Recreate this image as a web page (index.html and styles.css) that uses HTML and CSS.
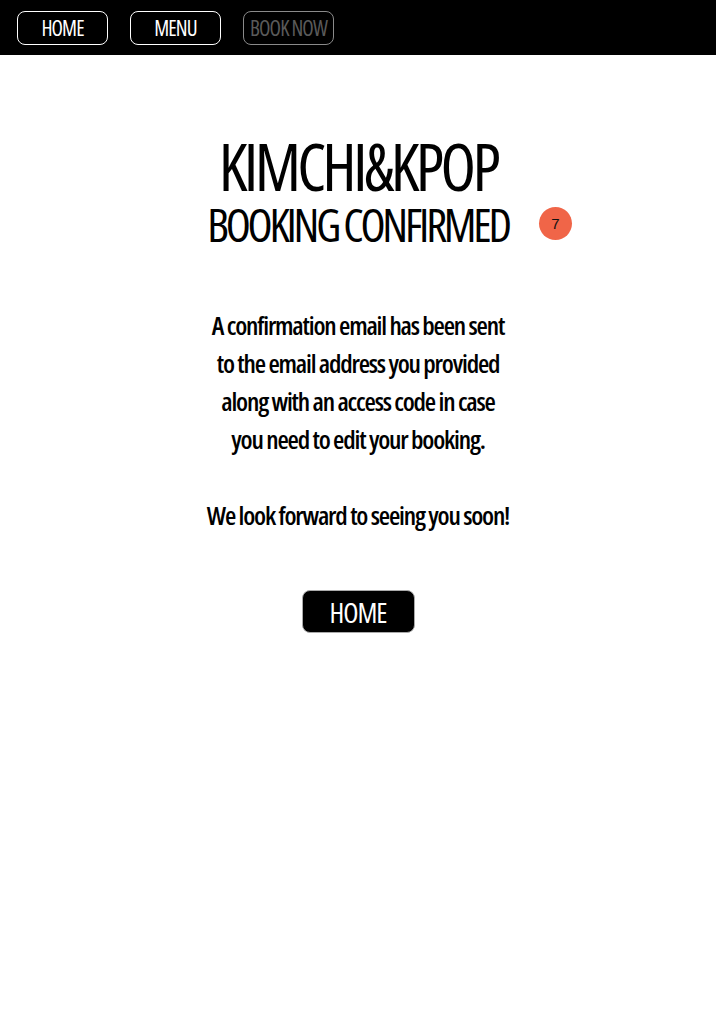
FILE: index.html
```html
<!DOCTYPE html>
<html lang="en">
<head>
<meta charset="utf-8">
<title>Kimchi&amp;Kpop — Booking Confirmed</title>
<link rel="stylesheet" href="styles.css">
</head>
<body>
<header class="topbar">
  <nav class="nav">
    <a class="nav-btn" href="#">HOME</a>
    <a class="nav-btn" href="#">MENU</a>
    <a class="nav-btn nav-btn--disabled" href="#">BOOK NOW</a>
  </nav>
</header>
<main class="content">
  <div class="heading">
    <h1 class="brand">KIMCHI&amp;KPOP</h1>
    <h2 class="subtitle">BOOKING CONFIRMED</h2>
    <span class="badge">7</span>
  </div>
  <p class="message">A confirmation email has been sent<br>to the email address you provided<br>along with an access code in case<br>you need to edit your booking.</p>
  <p class="message">We look forward to seeing you soon!</p>
  <a class="home-btn" href="#">HOME</a>
</main>
</body>
</html>
```
FILE: styles.css
```css
html, body {
  margin: 0;
  padding: 0;
  background: #ffffff;
}
body {
  font-family: "Open Sans", "Roboto", sans-serif;
  font-stretch: 75%;
  color: #000;
}
.topbar {
  background: #000;
  height: 55px;
  box-sizing: border-box;
  padding: 11px 17px 0;
}
.nav {
  display: flex;
  gap: 22px;
}
.nav-btn {
  display: flex;
  align-items: center;
  justify-content: center;
  width: 91px;
  height: 34px;
  box-sizing: border-box;
  border: 1px solid #fff;
  border-radius: 8px;
  color: #fff;
  text-decoration: none;
  font-size: 21px;
  font-weight: 500;
  letter-spacing: -0.9px;
}
.nav-btn--disabled {
  color: #5a5a5a;
  border-color: #8a8a8a;
}
.content {
  display: flex;
  flex-direction: column;
  align-items: center;
}
.heading {
  position: relative;
  display: flex;
  flex-direction: column;
  align-items: center;
  margin-top: 78px;
}
.brand {
  margin: 0;
  font-size: 65px;
  line-height: 66px;
  font-weight: 500;
  letter-spacing: -3.6px;
}
.subtitle {
  margin: 0;
  font-size: 46px;
  line-height: 50px;
  font-weight: 400;
  letter-spacing: -3.2px;
}
.badge {
  position: absolute;
  right: -63px;
  top: 74px;
  width: 33px;
  height: 33px;
  border-radius: 50%;
  background: #f06548;
  color: #111;
  font-family: "Liberation Sans", sans-serif;
  font-stretch: 100%;
  font-size: 15px;
  display: flex;
  align-items: center;
  justify-content: center;
}
.message {
  margin: 0;
  text-align: center;
  font-size: 26px;
  line-height: 38px;
  font-weight: 550;
  letter-spacing: -1.2px;
}
.message:first-of-type {
  margin-top: 57px;
}
.message + .message {
  margin-top: 38px;
}
.home-btn {
  margin-top: 56px;
  display: flex;
  align-items: center;
  justify-content: center;
  width: 113px;
  height: 43px;
  box-sizing: border-box;
  background: #000;
  border: 1px solid #aaa;
  border-radius: 8px;
  color: #fff;
  text-decoration: none;
  font-size: 28px;
  font-weight: 500;
  letter-spacing: -1px;
}
```
